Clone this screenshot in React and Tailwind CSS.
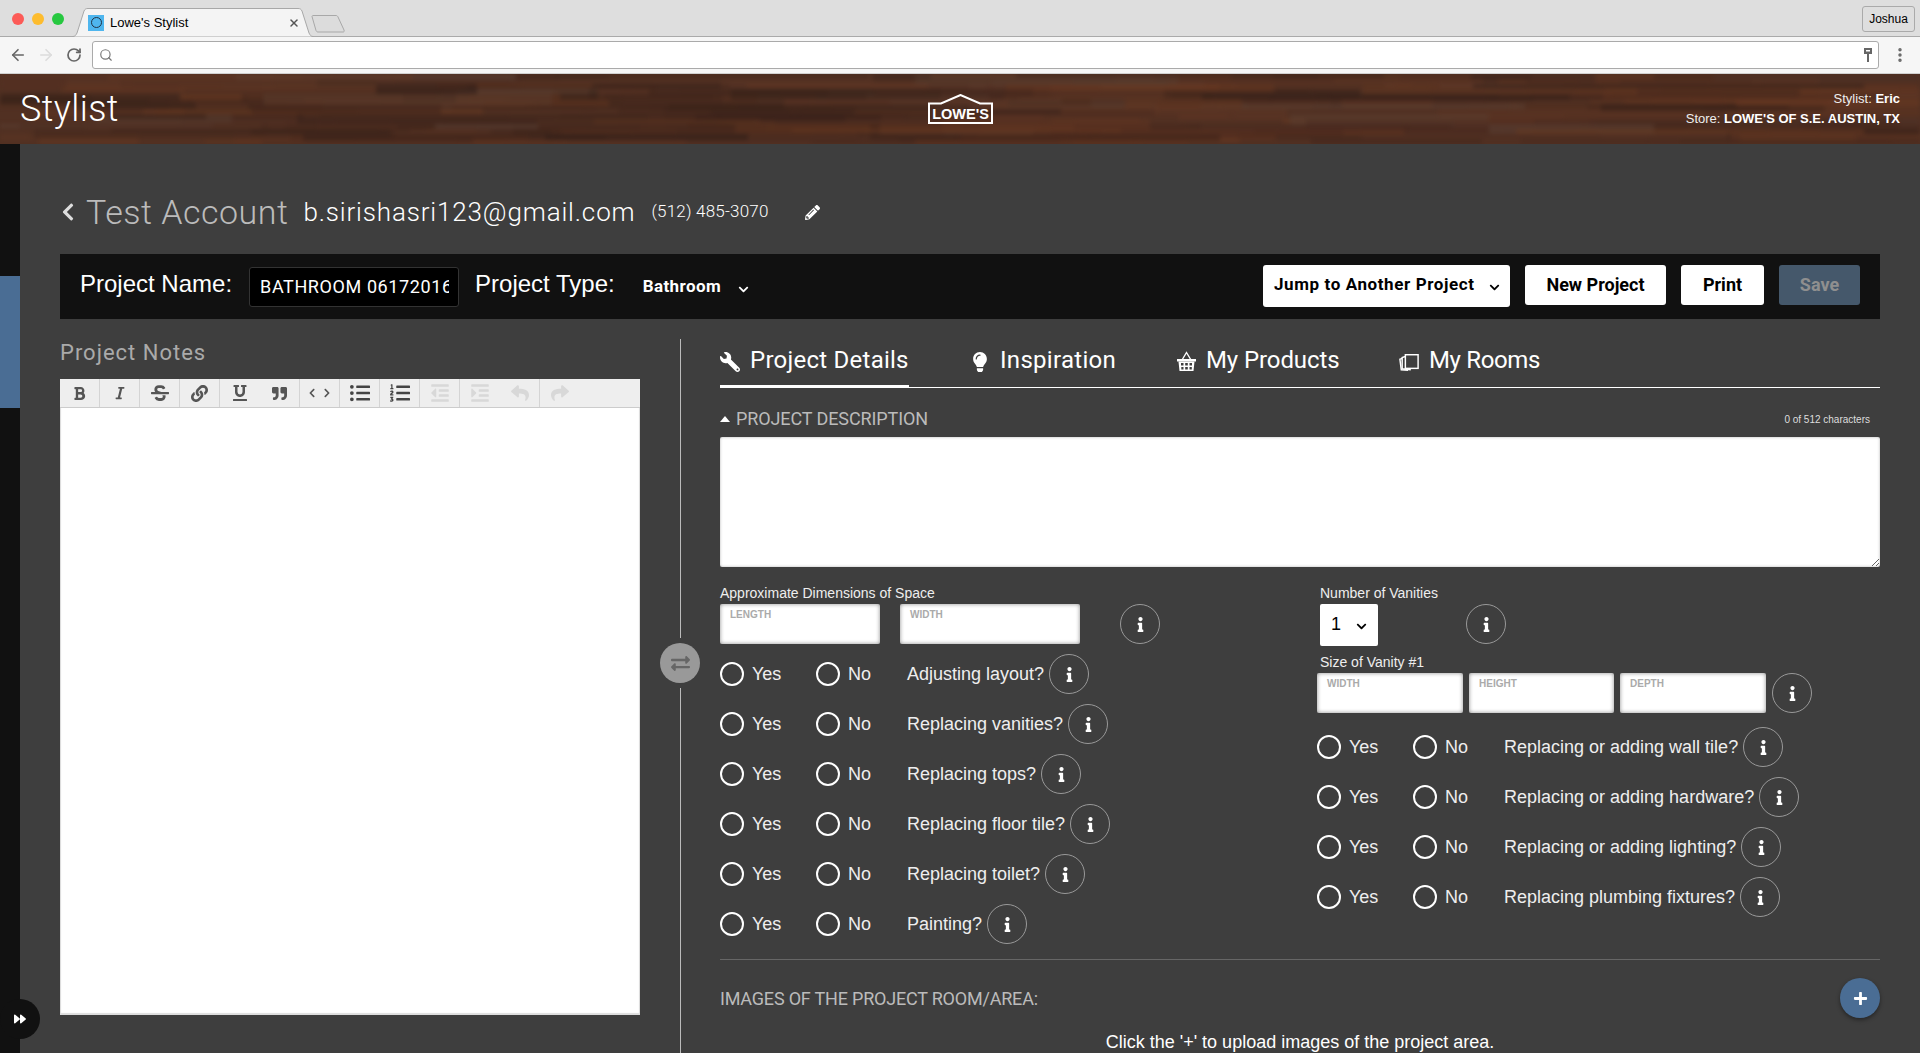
import { ArrowLeft, ArrowRight, EllipsisVertical, RotateCw, Search, X } from "lucide-react";
import {
  FaBold,
  FaChevronDown,
  FaChevronLeft,
  FaChevronRight,
  FaExchangeAlt,
  FaForward,
  FaIndent,
  FaInfo,
  FaItalic,
  FaLightbulb,
  FaLink,
  FaListOl,
  FaListUl,
  FaOutdent,
  FaPencilAlt,
  FaPlus,
  FaQuoteRight,
  FaReply,
  FaShare,
  FaStrikethrough,
  FaUnderline,
  FaWrench,
} from "react-icons/fa";

const din = "font-['Roboto',sans-serif]";
const arial = "font-['Liberation_Sans',Arial,sans-serif]";

// wood planks for the header, seeded so every render gives the same boards
const woodColors = ["#3a2219", "#45281d", "#5d3524", "#6a3a22", "#342019", "#5a4034", "#613520", "#4d2d21"];
let seed = 11;
const rand = () => {
  seed = (seed * 16807) % 2147483647;
  return seed / 2147483647;
};
const planks = Array.from({ length: 260 }, () => ({
  x: Math.floor(rand() * 1920) - 100,
  y: Math.floor(rand() * 14) * 5,
  w: 80 + Math.floor(rand() * 320),
  h: 3 + Math.floor(rand() * 9),
  fill: woodColors[Math.floor(rand() * woodColors.length)],
  o: 0.3 + rand() * 0.4,
}));

const leftQuestions = [
  "Adjusting layout?",
  "Replacing vanities?",
  "Replacing tops?",
  "Replacing floor tile?",
  "Replacing toilet?",
  "Painting?",
];

const rightQuestions = [
  "Replacing or adding wall tile?",
  "Replacing or adding hardware?",
  "Replacing or adding lighting?",
  "Replacing plumbing fixtures?",
];

function CodeIcon() {
  return (
    <span className="flex items-center gap-[5px]">
      <FaChevronLeft size={10} />
      <FaChevronRight size={10} />
    </span>
  );
}

const toolbarButtons = [
  { icon: <FaBold size={15} />, color: "text-[#555]" },
  { icon: <FaItalic size={14} />, color: "text-[#555]" },
  { icon: <FaStrikethrough size={18} />, color: "text-[#555]" },
  { icon: <FaLink size={17} />, color: "text-[#555]" },
  { icon: <FaUnderline size={16} />, color: "text-[#555]", noBorder: true },
  { icon: <FaQuoteRight size={15} />, color: "text-[#555]" },
  { icon: <CodeIcon />, color: "text-[#555]" },
  { icon: <FaListUl size={20} />, color: "text-[#444]" },
  { icon: <FaListOl size={20} />, color: "text-[#444]" },
  { icon: <FaOutdent size={20} />, color: "text-[#d8d8d8]" },
  { icon: <FaIndent size={20} />, color: "text-[#d8d8d8]", noBorder: true },
  { icon: <FaReply size={18} />, color: "text-[#d8d8d8]" },
  { icon: <FaShare size={18} />, color: "text-[#d8d8d8]", noBorder: true },
];

function InfoButton({ className = "" }) {
  return (
    <button className={`flex h-10 w-10 shrink-0 items-center justify-center rounded-full border border-[#999] text-white ${className}`}>
      <FaInfo size={15} />
    </button>
  );
}

function Question({ label }) {
  return (
    <div className={`flex h-10 items-center text-[18px] text-[#eee] ${arial}`}>
      <div className="flex w-[96px] items-center gap-2">
        <span className="h-6 w-6 rounded-full border-2 border-white" />
        <span>Yes</span>
      </div>
      <div className="flex w-[91px] items-center gap-2">
        <span className="h-6 w-6 rounded-full border-2 border-white" />
        <span>No</span>
      </div>
      <span>{label}</span>
      <InfoButton className="ml-[5px]" />
    </div>
  );
}

function DimensionInput({ label, width }) {
  return (
    <div className={`h-10 rounded-[2px] bg-white px-[10px] pt-[4px] text-[10px] font-bold leading-[14px] text-[#aaa] shadow-[inset_0_0_4px_rgba(0,0,0,0.45)] ${arial} ${width}`}>
      {label}
    </div>
  );
}

function Tab({ icon, label, active, className = "" }) {
  return (
    <div className={`-mb-px flex h-[49px] items-center text-[24px] text-white ${din} ${active ? "border-b-[3px] border-white pb-[4px]" : "pb-[7px]"} ${className}`}>
      <span className="flex w-5 shrink-0 items-center justify-center pt-[3px]">{icon}</span>
      <span className="ml-[10px] whitespace-nowrap">{label}</span>
    </div>
  );
}

function BasketIcon() {
  return (
    <svg width="19" height="21" viewBox="0 0 19 21" fill="white">
      <path d="M5 9 L9.500 1.500 L14 9" fill="none" stroke="white" strokeWidth="1.4" />
      <path d="M0 8 H19 V10.500 H0 Z" />
      <path
        fillRule="evenodd"
        d="M1.500 10.500 H17.500 L16.500 20 H2.500 Z M4 12 V14.500 H6.500 V12 Z M8.200 12 V14.500 H10.800 V12 Z M12.500 12 V14.500 H15 V12 Z M4.300 16 V18.500 H6.500 V16 Z M8.200 16 V18.500 H10.800 V16 Z M12.500 16 V18.500 H14.800 V16 Z"
      />
    </svg>
  );
}

function RoomsIcon() {
  return (
    <svg width="22" height="20" viewBox="0 0 22 20" fill="none" stroke="white" strokeWidth="1.6">
      <rect x="7" y="2" width="14" height="15" />
      <path d="M7 4 L3.500 5 V17.500 L13 18.500" />
      <path d="M3.500 6 L1 7 L2.500 18.500 L10 19" />
    </svg>
  );
}

function BrowserChrome() {
  return (
    <>
      <div className="flex h-[37px] shrink-0 items-start border-b border-[#aaa] bg-[#dedede]">
        <div className="flex w-[72px] shrink-0 gap-2 pl-3 pt-[13px]">
          <span className="h-3 w-3 rounded-full bg-[#fc5b57]" />
          <span className="h-3 w-3 rounded-full bg-[#fdbc2e]" />
          <span className="h-3 w-3 rounded-full bg-[#27c840]" />
        </div>
        <div className="relative mt-2 flex h-[29px] w-[242px] shrink-0 items-center pl-[16px] pr-[14px]">
          <svg className="absolute inset-0" width="242" height="29" viewBox="0 0 242 29">
            <path d="M0 28.5 H1 C3 28.5 4 27 5 25 L12 3 C13 1 14 .5 16 .5 H226 C228 .5 229 1 230 3 L237 25 C238 27 239 28.5 241 28.5 H242" fill="#f4f4f4" stroke="#a8a8a8" />
          </svg>
          <span className="relative flex h-4 w-4 items-center justify-center bg-[#4fb6ee]">
            <span className="h-[11px] w-[11px] rounded-full border border-[#234]" />
          </span>
          <span className={`relative ml-[6px] text-[13px] text-black ${arial}`}>Lowe's Stylist</span>
          <X className="relative ml-auto text-[#555]" size={12} strokeWidth={3} />
        </div>
        <svg className="-ml-[3px] mt-[15px] shrink-0" width="34" height="18" viewBox="0 0 34 18">
          <path d="M1 1.5 C1 1 1.500 .5 2 .5 H25 C26 .5 26.500 1 27 2 L33 15 C33.500 16.500 33 17 32 17 H7 C6 17 5.500 16.500 5 15.500 Z" fill="#dcdcdc" stroke="#a8a8a8" />
        </svg>
        <div className={`ml-auto mr-[5px] mt-[6px] flex h-[26px] w-[53px] items-center justify-center rounded-[3px] border border-[#aaa] text-[12px] text-black ${arial}`}>
          Joshua
        </div>
      </div>
      <div className="flex h-[37px] shrink-0 items-center border-b border-[#d0d0d0] bg-[#f6f6f6] pl-[9px]">
        <ArrowLeft className="text-[#666]" size={18} strokeWidth={2.2} />
        <ArrowRight className="ml-[10px] text-[#dcdcdc]" size={18} strokeWidth={2.2} />
        <RotateCw className="ml-[11px] text-[#666]" size={16} strokeWidth={2.6} />
        <div className="ml-[10px] flex h-[28px] w-[1787px] items-center justify-between rounded-[3px] border border-[#aaa] bg-white px-[6px]">
          <Search className="text-[#777]" size={14} strokeWidth={2} />
          <svg width="8" height="14" viewBox="0 0 8 14">
            <path d="M0 0 H8 V6 H5 V14 H3 V6 H0 Z M2 2 V3.500 H6 V2 Z" fill="#666" fillRule="evenodd" />
          </svg>
        </div>
        <EllipsisVertical className="ml-[12px] text-[#666]" size={18} strokeWidth={2.6} />
      </div>
    </>
  );
}

function WoodHeader() {
  return (
    <header className="relative flex h-[70px] shrink-0 items-center justify-between overflow-hidden bg-[#513022] pl-5 pr-5">
      <svg className="absolute inset-0 blur-[2px]" width="1920" height="70" viewBox="0 0 1920 70">
        {planks.map((p, i) => (
          <rect key={i} x={p.x} y={p.y} width={p.w} height={p.h} fill={p.fill} opacity={p.o} />
        ))}
      </svg>
      <span className={`relative text-[36px] font-light leading-none tracking-[0.4px] text-white ${din}`}>Stylist</span>
      <svg className="absolute left-[928px] top-[20px]" width="65" height="30" viewBox="0 0 65 30">
        <path d="M1 29 V9.500 H13 L32.500 1 L52 9.500 H64 V29 Z" fill="none" stroke="white" strokeWidth="2" />
        <text x="32.5" y="24.500" textAnchor="middle" fill="white" fontSize="14.5" fontWeight="700" fontFamily="Liberation Sans, Arial, sans-serif">LOWE'S</text>
      </svg>
      <div className={`relative text-right text-[13px] leading-[20px] text-[#eee] ${arial}`}>
        <div>
          Stylist: <b className="text-white">Eric</b>
        </div>
        <div>
          Store: <b className="text-white">LOWE'S OF S.E. AUSTIN, TX</b>
        </div>
      </div>
    </header>
  );
}

function ProjectBar() {
  return (
    <div className="mt-5 flex h-[65px] items-center bg-[#111] pl-5 pr-5">
      <span className={`mb-[6px] text-[24px] text-white ${arial}`}>Project Name:</span>
      <div className={`ml-[17px] flex h-10 w-[210px] items-center overflow-hidden whitespace-nowrap rounded-[3px] border border-[#333] bg-black pl-[10px] pr-[9px] text-[18px] tracking-[0.6px] text-white ${din}`}>
        <span className="block w-full overflow-hidden">BATHROOM 06172016</span>
      </div>
      <span className={`mb-[6px] ml-[16px] text-[24px] text-white ${arial}`}>Project Type:</span>
      <span className={`ml-[28px] mt-[1px] text-[17px] font-bold tracking-[0.4px] text-white ${din}`}>Bathroom</span>
      <FaChevronDown className="ml-[17px] mt-[5px] text-white" size={11} />
      <div className="ml-auto flex items-start gap-[15px] self-start pt-[11px]">
        <button className={`flex h-[42px] w-[247px] items-center rounded-[3px] bg-white pb-[2px] pl-[11px] text-[17px] font-bold tracking-[0.6px] text-black ${din}`}>
          Jump to Another Project
          <FaChevronDown className="ml-[14px] mt-[4px]" size={11} />
        </button>
        <button className={`h-10 w-[141px] rounded-[3px] bg-white pb-[2px] text-[18px] font-bold text-black ${din}`}>New Project</button>
        <button className={`h-10 w-[83px] rounded-[3px] bg-white pb-[2px] text-[18px] font-bold text-black ${din}`}>Print</button>
        <button className={`h-10 w-[81px] rounded-[3px] bg-[#45586b] pb-[2px] text-[18px] font-bold text-[#8f8f8f] ${din}`}>Save</button>
      </div>
    </div>
  );
}

function ProjectNotes() {
  return (
    <section className="w-[580px] shrink-0">
      <div className={`h-10 text-[22px] leading-[28px] tracking-[1px] text-[#aaa] ${din}`}>Project Notes</div>
      <div className="flex h-[29px] border-b border-[#ccc] bg-[#eee]">
        {toolbarButtons.map(({ icon, color, noBorder }, i) => (
          <span key={i} className={`flex h-full w-10 items-center justify-center ${noBorder ? "" : "border-r border-[#d4d4d4]"} ${color}`}>
            {icon}
          </span>
        ))}
      </div>
      <div className="h-[607px] border-x border-[#ddd] bg-white shadow-[inset_0_-2px_1px_#ddd]" />
    </section>
  );
}

function Divider() {
  return (
    <div className="flex w-[80px] shrink-0 flex-col items-center">
      <span className="h-[299px] w-px bg-[#bbb]" />
      <button className="my-[5px] flex h-10 w-10 shrink-0 items-center justify-center rounded-full bg-[#999] text-[#666]">
        <FaExchangeAlt size={19} />
      </button>
      <span className="h-[400px] w-px bg-[#bbb]" />
    </div>
  );
}

function ProjectDetails() {
  return (
    <section className="w-[1160px] shrink-0">
      <div className="flex h-[49px] border-b border-white">
        <Tab active className="w-[189px] tracking-[0.25px]" icon={<FaWrench className="-scale-x-100" size={20} />} label="Project Details" />
        <Tab className="ml-[61px] w-[146px] tracking-[0.3px]" icon={<FaLightbulb size={20} />} label="Inspiration" />
        <Tab className="ml-[60px] w-[163px] tracking-[-0.1px]" icon={<BasketIcon />} label="My Products" />
        <Tab className="ml-[60px] tracking-[-0.35px]" icon={<RoomsIcon />} label="My Rooms" />
      </div>
      <div className={`flex h-[49px] items-center justify-between pr-[10px] pt-[11px] text-[18px] tracking-[-0.1px] text-[#bbb] ${din}`}>
        <div className="flex items-center gap-[6px]">
          <span className="mt-[1px] h-0 w-0 border-x-[5px] border-b-[6px] border-x-transparent border-b-white" />
          <span>PROJECT DESCRIPTION</span>
        </div>
        <span className={`mt-[3px] text-[10px] tracking-normal text-[#ddd] ${arial}`}>0 of 512 characters</span>
      </div>
      <textarea className="block h-[130px] w-full rounded-[2px] bg-white shadow-[inset_0_0_3px_rgba(0,0,0,0.3)]" readOnly />

      <div className={`flex pt-[18px] text-[14px] leading-4 text-[#eee] ${arial}`}>
        <div className="w-[597px] shrink-0">
          <div>Approximate Dimensions of Space</div>
          <div className="mt-[3px] flex">
            <DimensionInput label="LENGTH" width="w-[160px]" />
            <DimensionInput label="WIDTH" width="ml-5 w-[180px]" />
            <InfoButton className="ml-10" />
          </div>
          <div className="mt-[10px] flex flex-col gap-[10px]">
            {leftQuestions.map((q) => (
              <Question key={q} label={q} />
            ))}
          </div>
        </div>
        <div className="flex-1">
          <div className="pl-[3px]">Number of Vanities</div>
          <div className="mt-[3px] flex items-start pl-[3px]">
            <div className="flex h-[42px] w-[58px] items-center rounded-[2px] bg-white pb-[3px] pl-[11px] text-[18px] text-black">
              1
              <FaChevronDown className="ml-[15px] mt-[5px]" size={11} />
            </div>
            <InfoButton className="ml-[88px]" />
          </div>
          <div className="mt-2 pl-[3px]">Size of Vanity #1</div>
          <div className="mt-[3px] flex">
            <DimensionInput label="WIDTH" width="w-[146px]" />
            <DimensionInput label="HEIGHT" width="ml-[6px] w-[145px]" />
            <DimensionInput label="DEPTH" width="ml-[6px] w-[146px]" />
            <InfoButton className="ml-[6px]" />
          </div>
          <div className="mt-[14px] flex flex-col gap-[10px]">
            {rightQuestions.map((q) => (
              <Question key={q} label={q} />
            ))}
          </div>
        </div>
      </div>

      <div className="mt-[15px] h-px bg-[#666]" />
      <div className="mt-[18px] flex items-center justify-between">
        <span className={`text-[18px] tracking-[-0.2px] text-[#bbb] ${din}`}>IMAGES OF THE PROJECT ROOM/AREA:</span>
        <button className="flex h-10 w-10 items-center justify-center rounded-full bg-[#4a6d94] text-white shadow-[0_2px_4px_rgba(0,0,0,0.4)]">
          <FaPlus size={15} />
        </button>
      </div>
      <p className={`mt-[14px] text-center text-[18px] leading-5 text-white ${arial}`}>Click the '+' to upload images of the project area.</p>
    </section>
  );
}

function App() {
  return (
    <div className="flex h-[1053px] w-full flex-col overflow-hidden bg-[#3e3e3e]">
      <BrowserChrome />
      <WoodHeader />
      <div className="relative flex min-h-0 flex-1">
        <aside className="w-5 shrink-0 bg-[#111] pt-[132px]">
          <div className="h-[132px] bg-[#4a6d94]" />
        </aside>
        <button className="absolute bottom-[14px] left-0 flex h-10 w-10 items-center justify-center rounded-full bg-[#111] text-white">
          <FaForward size={12} />
        </button>
        <main className="min-w-0 flex-1 px-10 pt-[46px]">
          <div className={`flex h-[44px] items-center ${din}`}>
            <FaChevronLeft className="-ml-[2px] text-[#ddd]" size={20} />
            <span className="ml-[8px] text-[34px] font-light tracking-[0.5px] text-[#bbb]">Test Account</span>
            <span className="ml-[15px] text-[26px] font-light tracking-[0.85px] text-white">b.sirishasri123@gmail.com</span>
            <span className="ml-[16px] text-[17px] font-light tracking-[0.2px] text-white">(512) 485-3070</span>
            <FaPencilAlt className="ml-[36px] text-white" size={15} />
          </div>
          <ProjectBar />
          <div className="mt-5 flex">
            <ProjectNotes />
            <Divider />
            <ProjectDetails />
          </div>
        </main>
      </div>
    </div>
  );
}

export default App;
